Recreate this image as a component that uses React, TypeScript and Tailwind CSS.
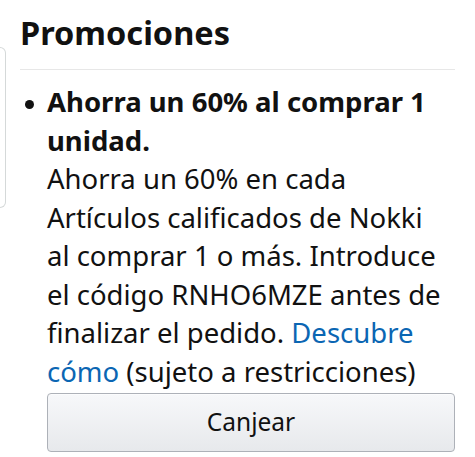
const lines = [
  'Ahorra un 60% en cada',
  'Artículos calificados de Nokki',
  'al comprar 1 o más. Introduce',
  'el código RNHO6MZE antes de',
];

export default function App() {
  return (
    <div className="flex w-[475px] h-[457px] overflow-hidden bg-white text-[#111] font-['Noto_Sans',sans-serif]">
      {/* edge of the previous card in the carousel */}
      <div className="mt-[47px] h-[161px] w-[6px] shrink-0 rounded-r-[6px] border border-l-0 border-[#d5d9d9]" />

      <section className="ml-[14px] w-[435px]">
        <h2 className="pt-[13px] text-[32.5px] leading-[40px] font-bold">Promociones</h2>
        <div className="mt-[16px] h-px bg-[#e7e7e7]" />

        <div className="mt-[13px] flex">
          <div className="w-[27px] shrink-0 pt-[17px] pl-[5px]">
            <div className="h-[9px] w-[9px] rounded-full bg-[#111]" />
          </div>
          <div className="flex-1 text-[27.5px] leading-[38.5px]">
            <p className="font-bold">Ahorra un 60% al comprar 1 unidad.</p>
            <p className="whitespace-nowrap">
              {lines.map((l) => (
                <span key={l} className="block">
                  {l}
                </span>
              ))}
              <span className="block">
                finalizar el pedido. <a className="text-[#0b66b3]">Descubre</a>
              </span>
              <span className="block">
                <a className="text-[#0b66b3]">cómo</a> (sujeto a restricciones)
              </span>
            </p>
            <button className="mt-[2px] flex h-[59px] w-full items-center justify-center rounded-[4px] border border-[#adb1b8] bg-gradient-to-b from-[#f7f8fa] to-[#e7e9ec] text-[24.5px] text-[#111] shadow-[0_1px_0_rgba(255,255,255,0.6)_inset]">
              Canjear
            </button>
          </div>
        </div>
      </section>
    </div>
  );
}
